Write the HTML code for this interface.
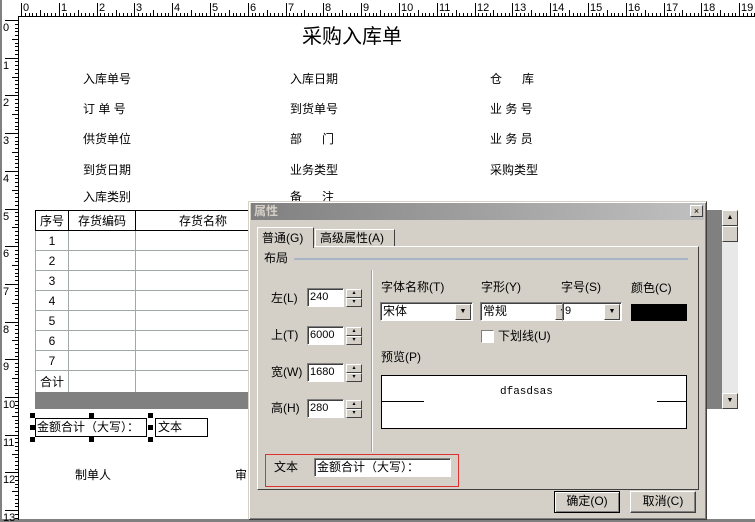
<!DOCTYPE html>
<html><head><meta charset="utf-8"><style>
*{margin:0;padding:0;box-sizing:border-box}
body{width:755px;height:522px;overflow:hidden;background:#fff;position:relative;font-family:"Liberation Sans","Noto Sans CJK SC",sans-serif;font-size:12px;color:#000}
.a{position:absolute;white-space:nowrap}
.lbl{position:absolute;font-size:12px;line-height:14px}
.in{position:absolute;background:#fff;border-top:1px solid #808080;border-left:1px solid #808080;border-right:1px solid #fff;border-bottom:1px solid #fff;box-shadow:inset 1px 1px 0 #404040;font-size:11px;line-height:16px;padding-left:2px}
.spin{position:absolute;width:16px;height:18px;background:#d4d0c8}
.spin div{height:9px;border:1px solid;border-color:#fff #404040 #404040 #fff;font-size:6px;line-height:7px;text-align:center}
.dd{position:absolute;right:1px;top:1px;width:16px;height:16px;background:#d4d0c8;border:1px solid;border-color:#fff #404040 #404040 #fff;font-size:7px;line-height:14px;text-align:center}
.btn{position:absolute;background:#d4d0c8;border:1px solid;border-color:#fff #404040 #404040 #fff;box-shadow:inset -1px -1px 0 #808080;text-align:center;font-size:12px;line-height:19px}
td{border:1px solid #a0a8a8;height:20px;font-size:12px;text-align:center;padding:0}
</style></head><body>
<div class="a" style="left:0;top:0;width:2px;height:522px;background:#808080"></div>
<div class="a" style="left:0;top:519px;width:755px;height:3px;background:#808080"></div>
<div class="a" style="left:19px;top:16px;width:736px;height:1px;background:#000"></div>
<div class="a" style="left:18px;top:16px;width:1px;height:504px;background:#000"></div>
<svg class="a" style="left:0;top:0" width="755" height="522" id="rs"></svg>

<div class="a" style="left:302px;top:25px;font-size:20px;line-height:24px">采购入库单</div>
<div class="lbl" style="left:83px;top:72px">入库单号</div>
<div class="lbl" style="left:290px;top:72px">入库日期</div>
<div class="lbl" style="left:490px;top:72px">仓&nbsp;&nbsp;&nbsp;&nbsp;&nbsp;&nbsp;库</div>
<div class="lbl" style="left:83px;top:102px">订&nbsp;单&nbsp;号</div>
<div class="lbl" style="left:290px;top:102px">到货单号</div>
<div class="lbl" style="left:490px;top:102px">业&nbsp;务&nbsp;号</div>
<div class="lbl" style="left:83px;top:132px">供货单位</div>
<div class="lbl" style="left:290px;top:132px">部&nbsp;&nbsp;&nbsp;&nbsp;&nbsp;&nbsp;门</div>
<div class="lbl" style="left:490px;top:132px">业&nbsp;务&nbsp;员</div>
<div class="lbl" style="left:83px;top:163px">到货日期</div>
<div class="lbl" style="left:290px;top:163px">业务类型</div>
<div class="lbl" style="left:490px;top:163px">采购类型</div>
<div class="lbl" style="left:83px;top:190px">入库类别</div>
<div class="lbl" style="left:290px;top:190px">备&nbsp;&nbsp;&nbsp;&nbsp;&nbsp;&nbsp;注</div>

<table class="a" style="left:35px;top:210px;border-collapse:collapse;border:1px solid #000;width:690px;table-layout:fixed">
<tr><td style="width:33px;border-color:#000">序号</td><td style="width:67px;border-color:#000">存货编码</td><td style="width:135px;border-color:#000">存货名称</td><td style="border-color:#000"></td></tr>
<tr><td>1</td><td></td><td></td><td></td></tr><tr><td>2</td><td></td><td></td><td></td></tr><tr><td>3</td><td></td><td></td><td></td></tr>
<tr><td>4</td><td></td><td></td><td></td></tr><tr><td>5</td><td></td><td></td><td></td></tr><tr><td>6</td><td></td><td></td><td></td></tr>
<tr><td>7</td><td></td><td></td><td></td></tr><tr><td style="height:22px">合计</td><td></td><td></td><td></td></tr>
</table>
<div class="a" style="left:35px;top:392px;width:703px;height:17px;background:#808080"></div>
<div class="a" style="left:706px;top:210px;width:16px;height:199px;background:#808080"></div>
<div class="a" style="left:722px;top:210px;width:16px;height:199px;background:#e8e8e8"></div>
<div class="a" style="left:722px;top:210px;width:16px;height:16px;background:#d4d0c8;border:1px solid;border-color:#fff #404040 #404040 #fff;font-size:7px;text-align:center;line-height:14px">▲</div>
<div class="a" style="left:722px;top:226px;width:16px;height:16px;background:#d4d0c8;border:1px solid;border-color:#fff #404040 #404040 #fff"></div>
<div class="a" style="left:722px;top:393px;width:16px;height:16px;background:#d4d0c8;border:1px solid;border-color:#fff #404040 #404040 #fff;font-size:7px;text-align:center;line-height:14px">▼</div>

<div class="a" style="left:35px;top:418px;width:112px;height:19px;border:1px solid #000;line-height:17px;padding-left:1px;font-size:12px">金额合计（大写）：</div>
<div class="a" style="left:155px;top:418px;width:53px;height:19px;border:1px solid #000;line-height:17px;padding-left:2px">文本</div>
<div class="a" style="left:30px;top:413px;width:5px;height:5px;background:#000"></div>
<div class="a" style="left:89px;top:413px;width:5px;height:5px;background:#000"></div>
<div class="a" style="left:148px;top:413px;width:5px;height:5px;background:#000"></div>
<div class="a" style="left:30px;top:425px;width:5px;height:5px;background:#000"></div>
<div class="a" style="left:148px;top:425px;width:5px;height:5px;background:#000"></div>
<div class="a" style="left:30px;top:437px;width:5px;height:5px;background:#000"></div>
<div class="a" style="left:89px;top:437px;width:5px;height:5px;background:#000"></div>
<div class="a" style="left:148px;top:437px;width:5px;height:5px;background:#000"></div>
<div class="lbl" style="left:75px;top:468px">制单人</div>
<div class="lbl" style="left:235px;top:468px">审</div>

<div class="a" style="left:248px;top:201px;width:459px;height:319px;background:#d4d0c8;border:1px solid;border-color:#d4d0c8 #404040 #404040 #d4d0c8;box-shadow:inset 1px 1px 0 #fff,inset -1px -1px 0 #808080"></div>
<div class="a" style="left:251px;top:203px;width:453px;height:17px;background:linear-gradient(90deg,#808080,#c0c0c0);color:#d4d0c8;font-weight:bold;font-size:12px;line-height:17px;padding-left:3px">属性</div>
<div class="a" style="left:690px;top:205px;width:13px;height:12px;background:#d4d0c8;border:1px solid;border-color:#fff #404040 #404040 #fff;font-size:9px;line-height:10px;text-align:center">×</div>
<div class="a" style="left:257px;top:246px;width:442px;height:244px;border:1px solid;border-color:#fff #404040 #404040 #fff"></div>
<div class="a" style="left:257px;top:227px;width:57px;height:21px;background:#d4d0c8;border:1px solid;border-color:#fff #404040 transparent #fff;border-bottom:none;font-size:12px;line-height:20px;padding-left:4px">普通(G)</div>
<div class="a" style="left:315px;top:229px;width:80px;height:17px;border:1px solid;border-color:#fff #404040 transparent #fff;border-bottom:none;font-size:12px;line-height:16px;padding-left:4px">高级属性(A)</div>
<div class="lbl" style="left:264px;top:251px">布局</div>
<div class="a" style="left:294px;top:258px;width:394px;height:2px;background:#a8b4c8"></div>
<div class="a" style="left:371px;top:270px;width:2px;height:182px;border-left:1px solid #a0a0a0;border-right:1px solid #fff"></div>

<div class="lbl" style="left:271px;top:291px">左(L)</div>
<div class="in" style="left:307px;top:288px;width:37px;height:19px">240</div>
<div class="spin" style="left:346px;top:289px"><div>▴</div><div>▾</div></div>
<div class="lbl" style="left:271px;top:328px">上(T)</div>
<div class="in" style="left:307px;top:326px;width:37px;height:19px">6000</div>
<div class="spin" style="left:346px;top:327px"><div>▴</div><div>▾</div></div>
<div class="lbl" style="left:271px;top:365px">宽(W)</div>
<div class="in" style="left:307px;top:363px;width:37px;height:19px">1680</div>
<div class="spin" style="left:346px;top:364px"><div>▴</div><div>▾</div></div>
<div class="lbl" style="left:271px;top:401px">高(H)</div>
<div class="in" style="left:307px;top:399px;width:37px;height:19px">280</div>
<div class="spin" style="left:346px;top:400px"><div>▴</div><div>▾</div></div>

<div class="lbl" style="left:381px;top:280px">字体名称(T)</div>
<div class="lbl" style="left:481px;top:280px">字形(Y)</div>
<div class="lbl" style="left:561px;top:280px">字号(S)</div>
<div class="lbl" style="left:631px;top:281px">颜色(C)</div>
<div class="in" style="left:380px;top:302px;width:93px;height:19px;font-size:12px">宋体<div class="dd">▼</div></div>
<div class="in" style="left:480px;top:302px;width:93px;height:19px;font-size:12px">常规<div class="dd">▼</div></div>
<div class="in" style="left:562px;top:302px;width:60px;height:19px">9<div class="dd">▼</div></div>
<div class="a" style="left:631px;top:304px;width:56px;height:17px;background:#000"></div>
<div class="a" style="left:481px;top:330px;width:13px;height:13px;background:#fff;border:1px solid;border-color:#808080 #fff #fff #808080"></div>
<div class="lbl" style="left:498px;top:329px">下划线(U)</div>
<div class="lbl" style="left:381px;top:350px">预览(P)</div>
<div class="a" style="left:381px;top:375px;width:306px;height:54px;background:#fff;border:1px solid #000"></div>
<div class="a" style="left:382px;top:401px;width:42px;height:1px;background:#000"></div>
<div class="a" style="left:657px;top:401px;width:30px;height:1px;background:#000"></div>
<div class="a" style="left:500px;top:386px;font-family:'Liberation Mono',monospace;font-size:11px">dfasdsas</div>

<div class="a" style="left:265px;top:454px;width:194px;height:33px;border:1px solid #e03030"></div>
<div class="lbl" style="left:274px;top:460px">文本</div>
<div class="in" style="left:314px;top:458px;width:137px;height:19px;font-size:12px">金额合计（大写）：</div>

<div class="btn" style="left:554px;top:491px;width:66px;height:22px;border:1px solid #000;box-shadow:inset 1px 1px 0 #fff,inset -1px -1px 0 #808080">确定(O)</div>
<div class="btn" style="left:630px;top:491px;width:66px;height:22px">取消(C)</div>

<script>
var s=document.getElementById('rs'),h='';
for(var i=0;i<=19;i++){var x=21+i*37.8;for(var j=0;j<10;j++){var xx=Math.round(x+j*3.78)+.5;if(xx>755)break;var l=j==0?13:(j==5?6:3);h+='<line x1="'+xx+'" y1="'+(16-l)+'" x2="'+xx+'" y2="16" stroke="#000"/>';}
h+='<text x="'+(Math.round(x)+2)+'" y="11" font-size="11" font-family="Liberation Sans">'+i+'</text>';}
for(var i=0;i<=13;i++){var y=20+i*37.7;for(var j=0;j<10;j++){var yy=Math.round(y+j*3.77)+.5;if(yy>519)break;var l=j==0?13:(j==5?6:3);h+='<line x1="'+(18-l)+'" y1="'+yy+'" x2="18" y2="'+yy+'" stroke="#000"/>';}
h+='<text x="3" y="'+(Math.round(y)+11)+'" font-size="11" font-family="Liberation Sans">'+i+'</text>';}
s.innerHTML=h;
</script>
</body></html>
